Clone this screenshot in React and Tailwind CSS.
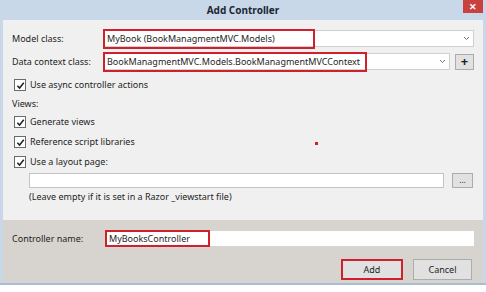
import React from 'react';

const font = { fontFamily: '"Noto Sans", "Open Sans", sans-serif' };

const Check = ({ label }) => (
    <div className="flex items-center h-[20px]">
        <div className="w-[12px] h-[12px] border border-[#6b6b6b] bg-white flex items-center justify-center mr-[4px] ml-[2px]">
            <svg width="9" height="9" viewBox="0 0 10 10">
                <path d="M1.5 5.2 L4 7.8 L8.6 2" stroke="#222" strokeWidth="1.7" fill="none" />
            </svg>
        </div>
        <span>{label}</span>
    </div>
);

const Arrow = () => (
    <svg width="7" height="5" viewBox="0 0 7 5" className="mr-[3px]">
        <path d="M1 1 L3.5 3.5 L6 1" stroke="#777" strokeWidth="1" fill="none" />
    </svg>
);

export default function App() {
    return (
        <div className="w-[486px] h-[292px] bg-[#c9d8e8] flex flex-col overflow-hidden text-[9px] text-[#1e1e1e]" style={font}>
            {/* Title bar */}
            <div className="h-[20px] flex items-center relative">
                <div className="flex-1 text-center font-bold text-[10px] text-[#1b2733] pt-[1px]">Add Controller</div>
                <div className="absolute right-[3px] top-0 w-[20px] h-[13px] bg-[#c8413e] flex items-center justify-center text-white text-[9px] font-bold">✕</div>
            </div>

            {/* Upper panel */}
            <div className="mx-[3px] h-[200px] bg-[#f0f0f0] px-[9px] pt-[9px] flex flex-col">
                <div className="flex items-center h-[19px]">
                    <span className="w-[91px]">Model class:</span>
                    <div className="flex-1 h-[17px] border border-[#cfcfcf] bg-white flex items-center justify-between relative">
                        <span className="pl-[3px]">MyBook (BookManagmentMVC.Models)</span>
                        <Arrow />
                        <div className="absolute left-[-1px] top-[-2px] w-[212px] h-[20px] border-2 border-[#d0202c]" />
                    </div>
                </div>
                <div className="flex items-center h-[19px] mt-[4px]">
                    <span className="w-[91px]">Data context class:</span>
                    <div className="flex-1 h-[17px] border border-[#cfcfcf] bg-white flex items-center justify-between relative">
                        <span className="pl-[3px]">BookManagmentMVC.Models.BookManagmentMVCContext</span>
                        <Arrow />
                        <div className="absolute left-[-1px] top-[-2px] w-[264px] h-[20px] border-2 border-[#d0202c]" />
                    </div>
                    <div className="w-[19px] h-[16px] ml-[5px] border border-[#acacac] bg-[#e1e1e1] flex items-center justify-center text-[13px] font-bold leading-none">+</div>
                </div>
                <div className="mt-[4px]">
                    <Check label="Use async controller actions" />
                </div>
                <div className="h-[17px] flex items-center">Views:</div>
                <Check label="Generate views" />
                <Check label="Reference script libraries" />
                <Check label="Use a layout page:" />
                <div className="flex items-center pl-[17px] mt-[1px]">
                    <div className="flex-1 h-[15px] bg-white border border-[#c3c3c3]" />
                    <div className="w-[21px] h-[15px] ml-[8px] mr-[1px] border border-[#acacac] bg-[#e1e1e1] flex items-center justify-center text-[8px] leading-none pb-[2px]">...</div>
                </div>
                <div className="pl-[17px] mt-[2px]">(Leave empty if it is set in a Razor _viewstart file)</div>
                <div className="relative flex-1">
                    <div className="absolute left-[303px] top-[-62px] w-[3px] h-[3px] bg-[#d0202c]" />
                </div>
            </div>

            {/* Lower panel */}
            <div className="mx-[3px] h-[63px] bg-[#d7d4cf] px-[9px] pt-[10px] flex flex-col">
                <div className="flex items-center h-[17px]">
                    <span className="w-[94px]">Controller name:</span>
                    <div className="flex-1 h-[15px] bg-white relative flex items-center">
                        <span className="pl-[3px]">MyBooksController</span>
                        <div className="absolute left-[-1px] top-[-1px] w-[105px] h-[17px] border-2 border-[#d0202c]" />
                    </div>
                </div>
                <div className="flex justify-end mt-[12px] gap-[10px] pr-[2px]">
                    <div className="w-[62px] h-[21px] bg-[#e1e1e1] border-2 border-[#d0202c] flex items-center justify-center">Add</div>
                    <div className="w-[59px] h-[21px] bg-[#e1e1e1] border border-[#adadad] flex items-center justify-center">Cancel</div>
                </div>
            </div>

            <div className="flex-1 bg-white border-t-2 border-[#a9bdd3]" />
        </div>
    );
}
